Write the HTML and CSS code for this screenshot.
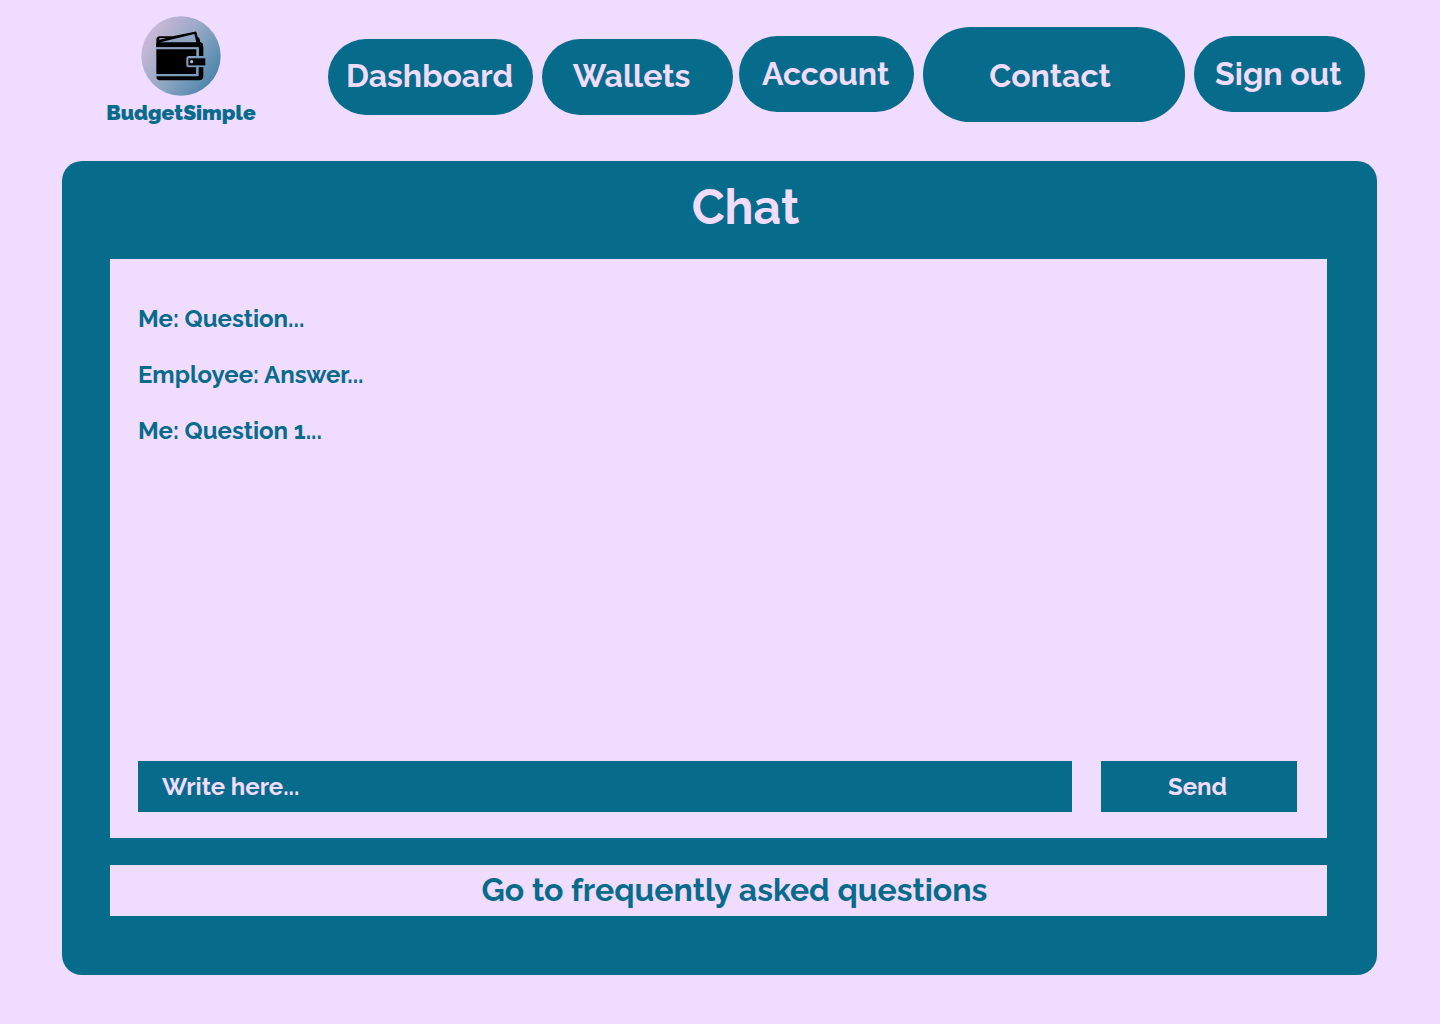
FILE: index.html
```html
<!DOCTYPE html>
<html lang="en">
<head>
  <meta charset="utf-8">
  <meta name="viewport" content="width=device-width, initial-scale=1">
  <title>BudgetSimple – Chat</title>
  <link rel="stylesheet" href="styles.css">
</head>
<body>
  <header class="header">
    <a class="brand" href="#home">
      <svg class="brand-logo" viewBox="32 32 240 240" aria-hidden="true">
        <defs>
          <linearGradient id="disc" x1="0" y1="0.15" x2="1" y2="0.85">
            <stop offset="0" stop-color="#d8bcdc"/>
            <stop offset="0.5" stop-color="#93a8c5"/>
            <stop offset="1" stop-color="#3f7fa6"/>
          </linearGradient>
        </defs>
        <circle cx="152" cy="152" r="119" fill="url(#disc)"/>
        <path d="M78 126V104q0-11 11-11h38l66-14q5-1 6 4l3 12q7 2 7 14l9 6v11z"/>
        <path d="M88 98h20l-21 5q-1-5 1-5z" fill="#a5acc9"/>
        <path d="M192 86l6 25h-108z" fill="#8fa5c4"/>
        <path d="M78 114h128q13 0 13 13v25h-14v-26H78z"/>
        <path d="M78 126h127v26h-7v-20H78z" fill="#88a2c1"/>
        <path d="M78 132h120v20h-22q-8 0-8 8v18q0 8 8 8h22v20H78z"/>
        <path d="M78 206h120v-20h7v27H78z" fill="#7c9dbe"/>
        <path d="M78 213h127v-27h14v26q0 13-13 13H88q-10 0-10-12z"/>
        <path d="M174 159h51v21h-51z"/>
        <circle cx="184" cy="169" r="5" fill="#9fc0dc"/>
      </svg>
      <span class="brand-name">BudgetSimple</span>
    </a>
    <nav class="nav" aria-label="Main">
      <div class="nav-group nav-group-money">
        <a class="pill pill-dashboard" href="#dashboard">Dashboard</a>
        <a class="pill pill-wallets" href="#wallets">Wallets</a>
      </div>
      <div class="nav-group nav-group-user">
        <a class="pill pill-account" href="#account">Account</a>
        <a class="pill pill-contact" href="#contact" aria-current="page">Contact</a>
        <a class="pill pill-signout" href="#signout">Sign out</a>
      </div>
    </nav>
  </header>

  <main class="panel">
    <h1 class="title">Chat</h1>
    <section class="chat" aria-label="Conversation">
      <div class="log">
        <p class="message">Me: Question...</p>
        <p class="message">Employee: Answer...</p>
        <p class="message">Me: Question 1...</p>
      </div>
      <form class="composer">
        <input class="field" type="text" aria-label="Message" placeholder="Write here...">
        <button class="send" type="submit">Send</button>
      </form>
    </section>
    <a class="faq" href="#faq">Go to frequently asked questions</a>
  </main>
</body>
</html>
```
FILE: styles.css
```css
:root {
  --teal: #076b8b;
  --lilac: #f0dcff;
}

* {
  box-sizing: border-box;
}

body {
  display: flex;
  flex-direction: column;
  min-height: 100vh;
  margin: 0;
  padding-bottom: 49px;
  background: var(--lilac);
  color: var(--teal);
  font-family: Raleway, Lato, sans-serif;
  font-weight: 700;
}

a {
  color: inherit;
  text-decoration: none;
}

.header {
  display: flex;
  align-items: flex-start;
  gap: 72px;
  padding: 16px 75px 0 106px;
}

.brand {
  display: flex;
  flex: 0 0 150px;
  flex-direction: column;
  align-items: center;
  min-width: 0;
}

.brand-logo {
  width: 80px;
  height: 80px;
}

.brand-name {
  margin-top: 3px;
  font-size: 21px;
  font-weight: 900;
  line-height: 28px;
}

.nav {
  display: flex;
  flex: 1;
  align-items: flex-start;
  gap: 6px;
  padding-top: 11px;
}

.nav-group {
  display: flex;
  align-items: flex-start;
  gap: 9px;
  min-width: 0;
}

.nav-group-money {
  flex: 405 1 0;
  padding-top: 12px;
}

.nav-group-user {
  flex: 626 1 0;
}

.pill {
  display: flex;
  align-items: center;
  justify-content: center;
  min-width: 0;
  height: 76px;
  border-radius: 48px;
  background: var(--teal);
  color: var(--lilac);
  font-size: 32px;
  line-height: 40px;
  white-space: nowrap;
}

.pill-dashboard,
.pill-wallets {
  padding-bottom: 2px;
}

.pill-dashboard {
  flex: 203 1 0;
  padding-right: 2px;
}

.pill-wallets {
  flex: 179 1 0;
  padding-right: 12px;
}

.pill-account,
.pill-signout {
  margin-top: 9px;
  padding-right: 2px;
}

.pill-account {
  flex: 173 1 0;
}

.pill-contact {
  flex: 253 1 0;
  height: 95px;
  padding: 3px 8px 0 0;
}

.pill-signout {
  flex: 169 1 0;
}

.panel {
  display: flex;
  flex: 1;
  flex-direction: column;
  margin: 34px 63px 0 62px;
  padding: 18px 50px 59px 48px;
  border-radius: 20px;
  background: var(--teal);
}

.title {
  margin: 0;
  padding-left: 54px;
  color: var(--lilac);
  font-size: 48px;
  line-height: 56px;
  text-align: center;
}

.chat {
  display: flex;
  flex: 1;
  flex-direction: column;
  justify-content: space-between;
  margin-top: 24px;
  padding: 44px 30px 26px 28px;
  background: var(--lilac);
}

.log {
  display: flex;
  flex-direction: column;
  gap: 24px;
}

.message {
  margin: 0;
  font-size: 24px;
  line-height: 32px;
}

.composer {
  display: flex;
  gap: 29px;
}

.field,
.send {
  height: 51px;
  border: 0;
  border-radius: 0;
  background: var(--teal);
  color: var(--lilac);
  font: inherit;
  font-size: 24px;
}

.field {
  flex: 1;
  min-width: 0;
  padding: 0 24px;
}

.field::placeholder {
  color: var(--lilac);
  opacity: 1;
}

.send {
  flex: 0 0 196px;
  padding: 0 3px 0 0;
}

.faq {
  margin-top: 27px;
  padding: 5px 0 6px 32px;
  background: var(--lilac);
  font-size: 32px;
  line-height: 40px;
  text-align: center;
}
```
